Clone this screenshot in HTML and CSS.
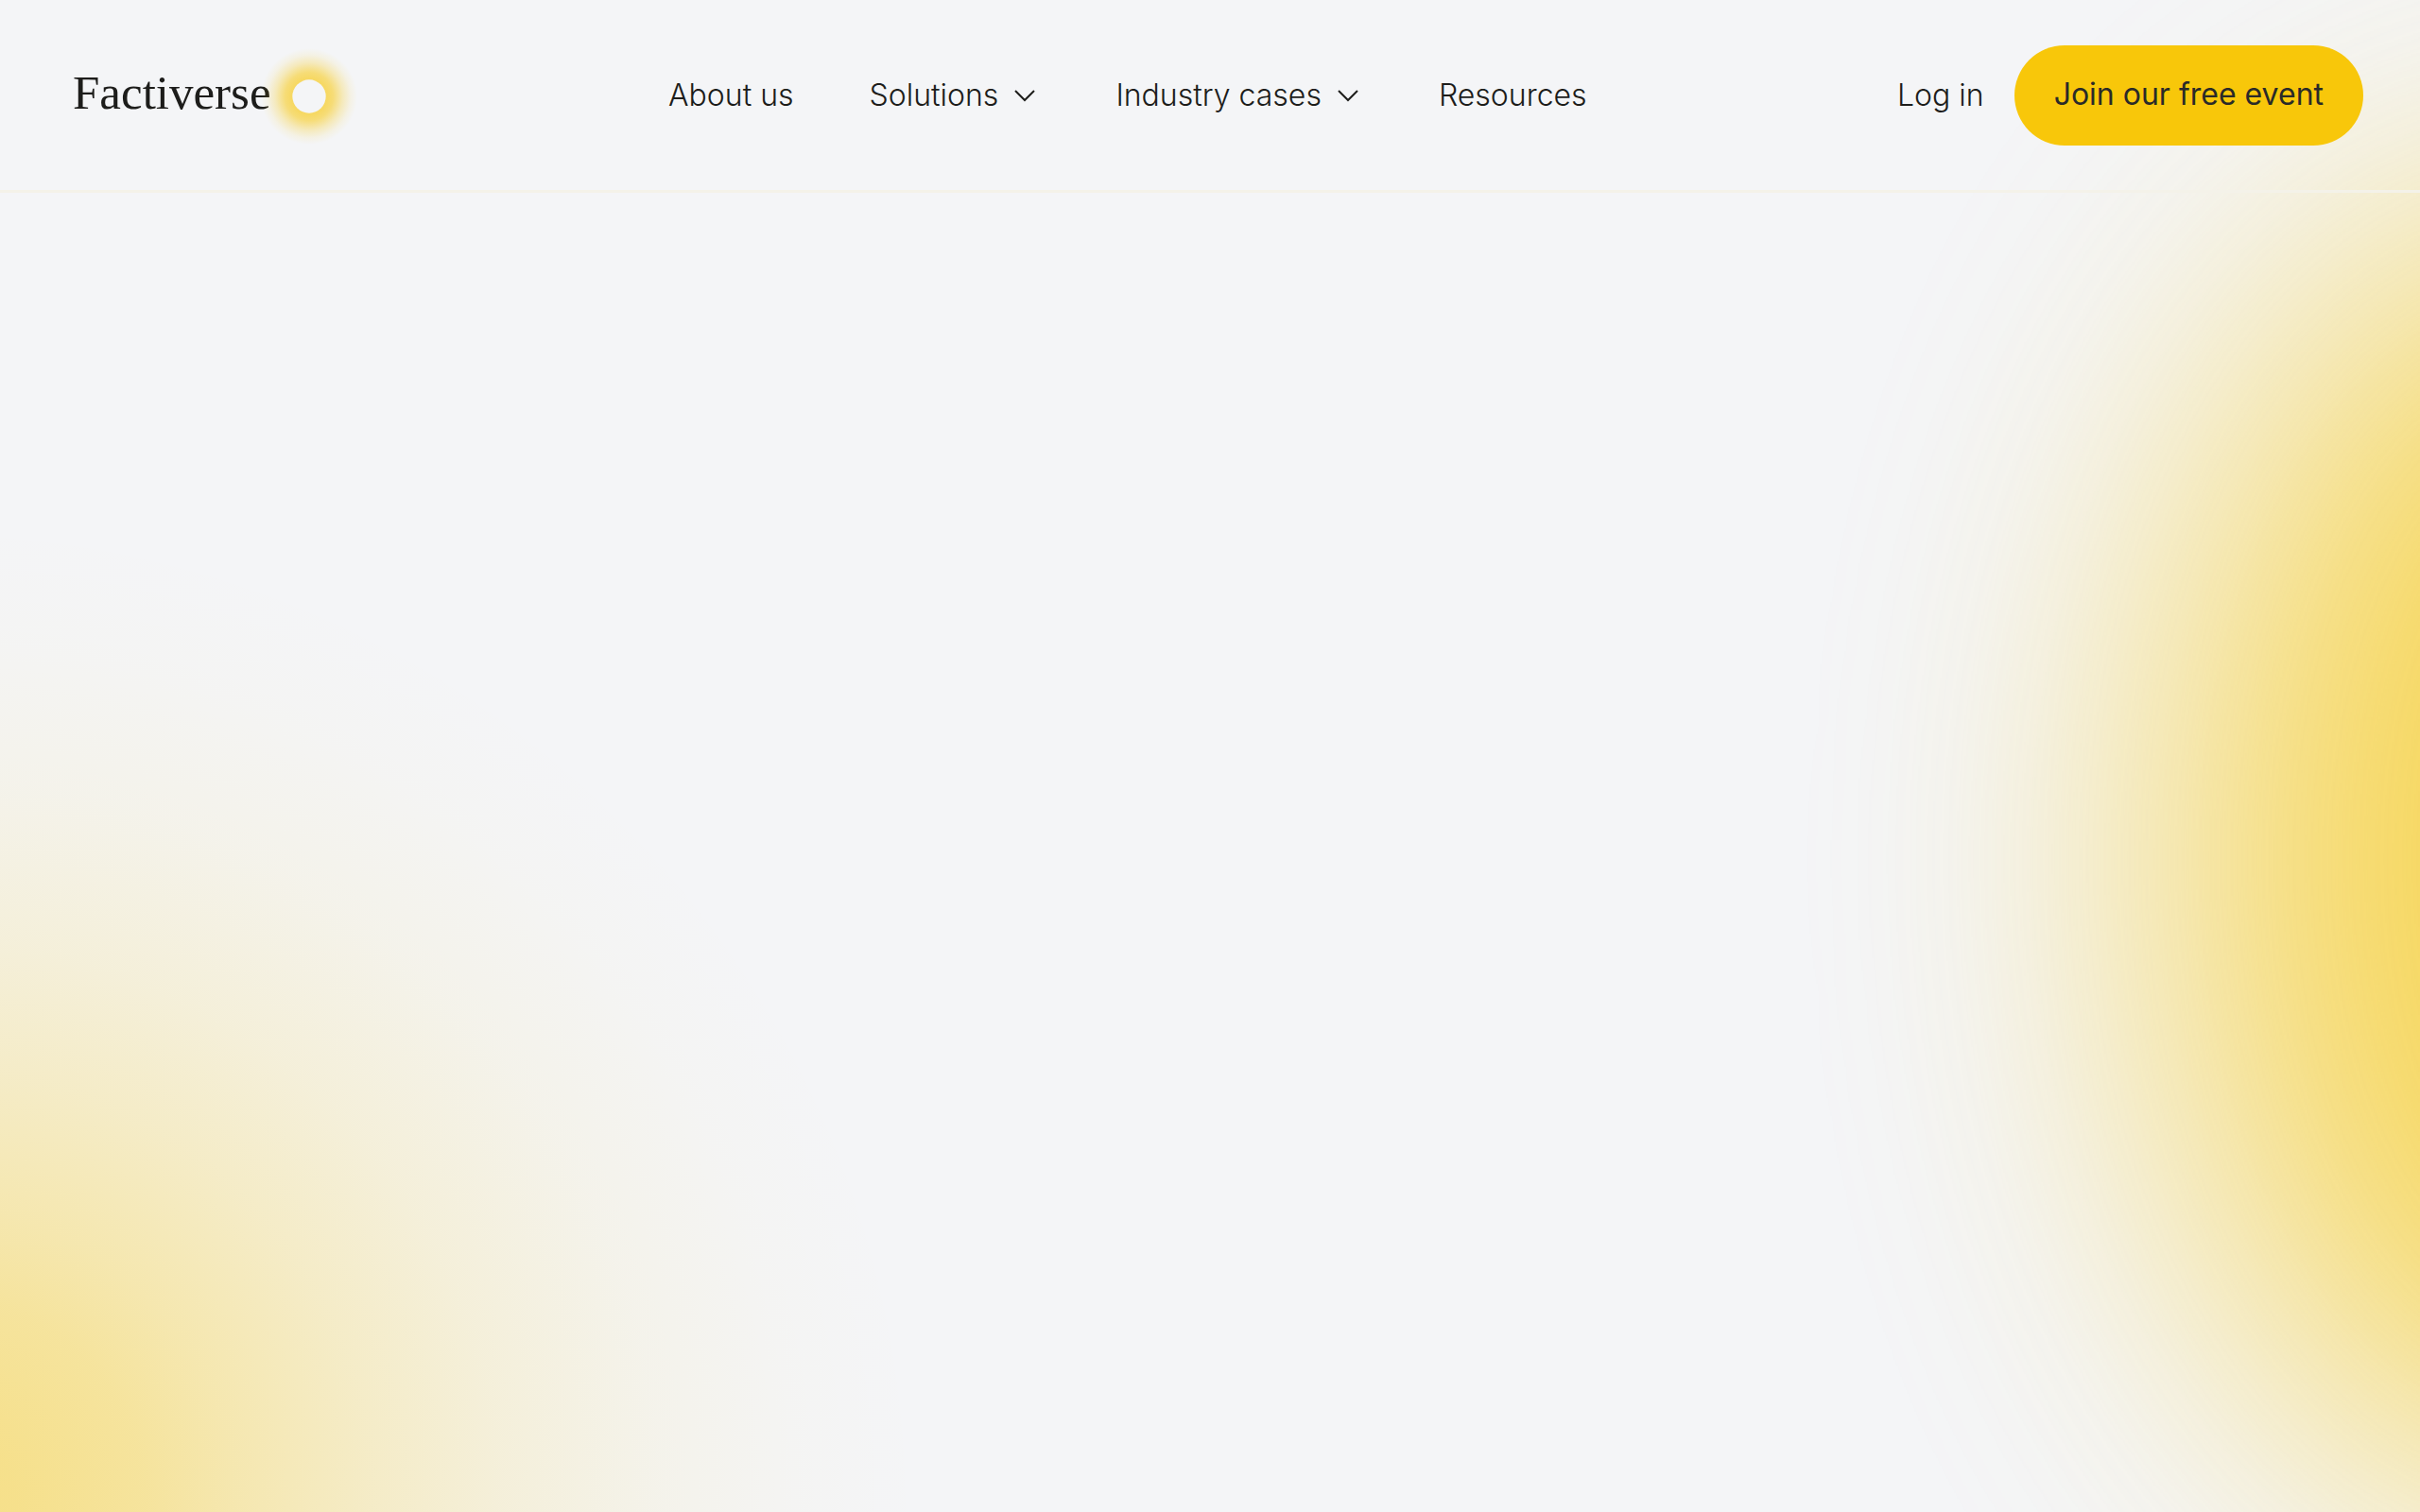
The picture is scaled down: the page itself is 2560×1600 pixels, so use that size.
FILE: index.html
```html
<!DOCTYPE html>
<html lang="en">
  <head>
    <meta charset="utf-8">
    <meta name="viewport" content="width=device-width, initial-scale=1.0">
    <title>Factiverse</title>
    <link rel="stylesheet" href="styles.css">
  </head>
  <body>
    <div class="glow"></div>

    <header class="navbar">
      <a class="logo" href="#">
        <span>Factiverse</span>
        <svg class="sun" viewBox="0 0 100 100" aria-hidden="true">
          <defs>
            <radialGradient id="halo">
              <stop offset="0.38" stop-color="#f8c70a" stop-opacity="0.62"/>
              <stop offset="0.5" stop-color="#f8c70a" stop-opacity="0.54"/>
              <stop offset="0.7" stop-color="#f8c70a" stop-opacity="0.25"/>
              <stop offset="0.86" stop-color="#f8c70a" stop-opacity="0.08"/>
              <stop offset="1" stop-color="#f8c70a" stop-opacity="0"/>
            </radialGradient>
          </defs>
          <circle cx="50" cy="51" r="49" fill="url(#halo)"/>
          <circle cx="50" cy="51" r="17" fill="#f4f5f7"/>
        </svg>
      </a>

      <nav class="menu">
        <a href="#">About us</a>
        <a href="#">Solutions
          <svg class="chevron" viewBox="0 0 24 14" aria-hidden="true"><path d="M2 2l10 10L22 2"/></svg>
        </a>
        <a href="#">Industry cases
          <svg class="chevron" viewBox="0 0 24 14" aria-hidden="true"><path d="M2 2l10 10L22 2"/></svg>
        </a>
        <a href="#">Resources</a>
      </nav>

      <div class="actions">
        <a href="#">Log in</a>
        <button type="button">Join our free event</button>
      </div>
    </header>

    <main></main>
  </body>
</html>
```
FILE: styles.css
```css
body {
  margin: 0;
  min-height: 100vh;
  overflow-x: hidden;
  background-color: #f4f5f7;
  color: #1d1d1b;
  font-family: Inter, "Liberation Sans", sans-serif;
  font-size: 32px;
  font-weight: 300;
  line-height: 40px;
}
a {
  color: inherit;
  text-decoration: none;
}

/* soft yellow light behind the page */
.glow {
  position: absolute;
  inset: 0;
  z-index: -1;
  overflow: hidden;
  background: radial-gradient(circle 1050px at -76px 100%,
    rgba(248, 199, 10, 0.47) 0%,
    rgba(248, 199, 10, 0.45) 9%,
    rgba(248, 199, 10, 0.38) 22%,
    rgba(248, 199, 10, 0.3) 31%,
    rgba(248, 199, 10, 0.2) 45%,
    rgba(248, 199, 10, 0.12) 58%,
    rgba(248, 199, 10, 0.05) 74%,
    rgba(248, 199, 10, 0.017) 88%,
    rgba(248, 199, 10, 0) 100%);
}
.glow::after {
  content: "";
  position: absolute;
  top: 234px;
  right: -570px;
  width: 820px;
  height: 1350px;
  border-radius: 50%;
  background-color: #f8c70a;
  opacity: 0.67;
  filter: blur(185px);
}

.navbar {
  display: flex;
  align-items: center;
  justify-content: space-between;
  height: 201px;
  padding: 0 60px 0 77px;
  border-bottom: 3px solid #f4f2e9;
}

.logo {
  display: flex;
  align-items: center;
  font-family: "Liberation Serif", serif;
  font-size: 51px;
  font-weight: 400;
}
.logo span {
  padding-bottom: 6px;
}
.sun {
  width: 104px;
  height: 104px;
  margin-left: -12px;
}

.menu {
  display: flex;
  gap: 80px;
}
.menu a {
  display: flex;
  align-items: center;
}
.chevron {
  width: 24px;
  height: 14px;
  margin: 0 4px 0 16px;
  fill: none;
  stroke: #1d1d1b;
  stroke-width: 2;
}

.actions {
  display: flex;
  align-items: center;
  gap: 32px;
}
button {
  padding: 32px 42px 34px;
  border: none;
  border-radius: 53px;
  background-color: #f8c70a;
  color: #2a2a28;
  font-family: inherit;
  font-size: 32px;
  font-weight: 400;
  line-height: 40px;
  cursor: pointer;
}
```
